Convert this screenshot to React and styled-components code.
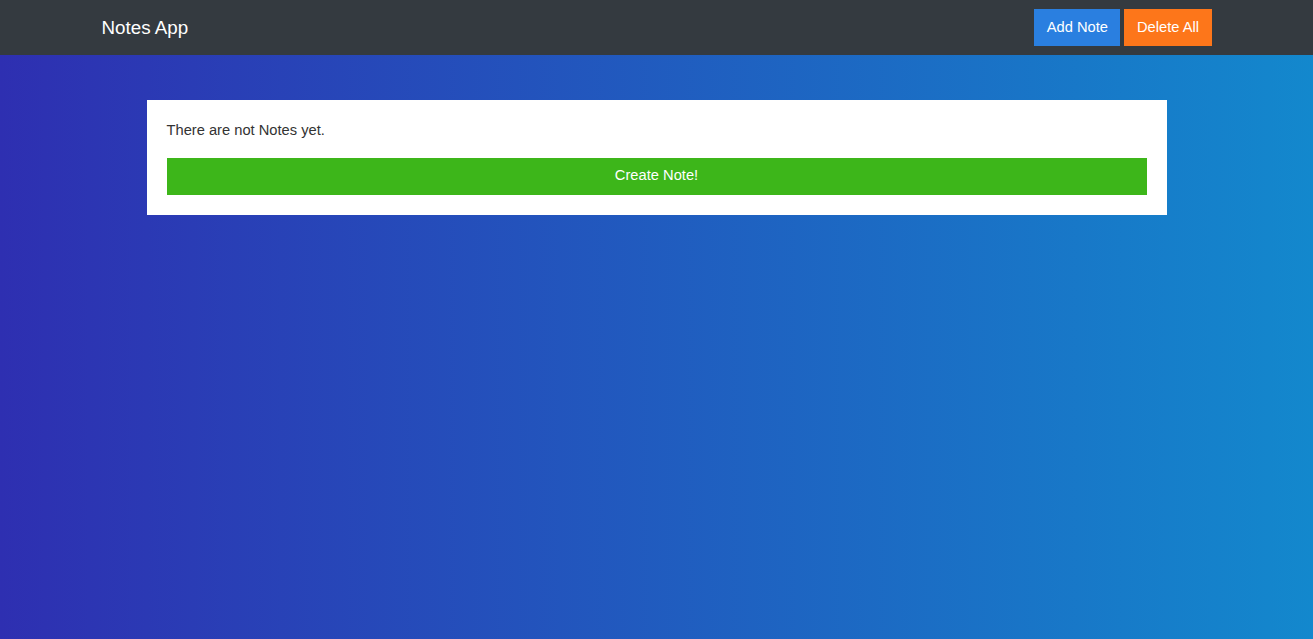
import styled, { createGlobalStyle } from 'styled-components';

const GlobalStyle = createGlobalStyle`
  html, body {
    margin: 0;
    padding: 0;
  }
  body {
    font-family: "Liberation Sans", Arial, sans-serif;
    color: #333;
  }
`;

const Page = styled.div`
  min-height: 639px;
  background: linear-gradient(to right, #2e2fb1, #1388cd);
`;

const Navbar = styled.nav`
  height: 55px;
  background-color: #343a40;
  display: flex;
  justify-content: center;
`;

const NavInner = styled.div`
  width: 1110px;
  display: flex;
  align-items: center;
  justify-content: space-between;
`;

const Brand = styled.span`
  color: #fff;
  font-size: 18.8px;
  padding-top: 1px;
`;

const NavButtons = styled.div`
  display: flex;
  gap: 4px;
`;

const NavButton = styled.button`
  height: 37px;
  padding: 0 12.5px 2px;
  border: none;
  color: #fff;
  font-family: inherit;
  font-size: 14.7px;
  background-color: ${(p) => p.color};
  cursor: pointer;
`;

const Main = styled.main`
  display: flex;
  justify-content: center;
  padding-top: 45px;
`;

const Card = styled.div`
  width: 1020px;
  box-sizing: border-box;
  background: #fff;
  padding: 20px;
`;

const EmptyText = styled.p`
  margin: 0 0 18px;
  padding-top: 1px;
  font-size: 14.7px;
  line-height: 19px;
  color: #333;
`;

const CreateButton = styled.button`
  width: 100%;
  height: 37px;
  padding: 0 0 3px;
  border: none;
  background-color: #3db61a;
  color: #fff;
  font-family: inherit;
  font-size: 14.7px;
  cursor: pointer;
`;

export default function App() {
  return (
    <Page>
      <GlobalStyle />
      <Navbar>
        <NavInner>
          <Brand>Notes App</Brand>
          <NavButtons>
            <NavButton color="#2a7fe0">Add Note</NavButton>
            <NavButton color="#fd761a">Delete All</NavButton>
          </NavButtons>
        </NavInner>
      </Navbar>
      <Main>
        <Card>
          <EmptyText>There are not Notes yet.</EmptyText>
          <CreateButton>Create Note!</CreateButton>
        </Card>
      </Main>
    </Page>
  );
}
